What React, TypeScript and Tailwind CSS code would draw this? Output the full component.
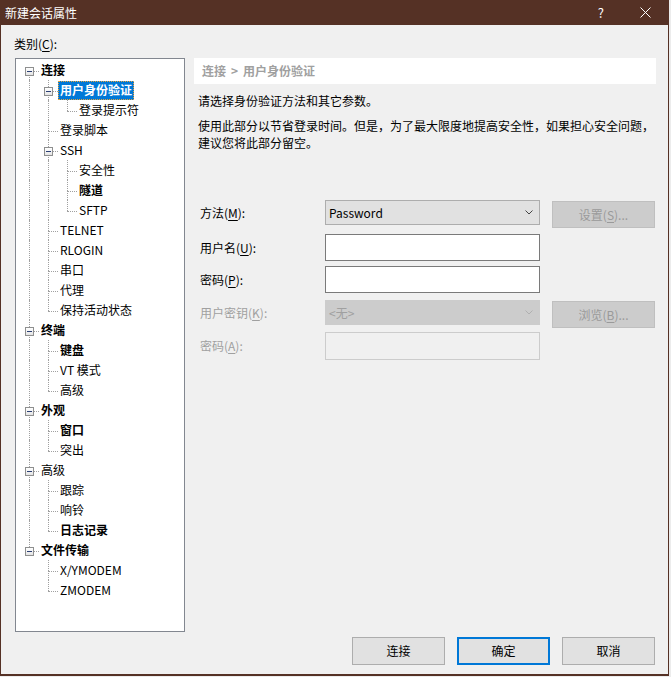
import React from 'react';

type N = { label: string; bold?: boolean; selected?: boolean; children?: N[] };

const TREE: N[] = [
  {
    label: '连接',
    bold: true,
    children: [
      { label: '用户身份验证', bold: true, selected: true, children: [{ label: '登录提示符' }] },
      { label: '登录脚本' },
      { label: 'SSH', children: [{ label: '安全性' }, { label: '隧道', bold: true }, { label: 'SFTP' }] },
      { label: 'TELNET' },
      { label: 'RLOGIN' },
      { label: '串口' },
      { label: '代理' },
      { label: '保持活动状态' },
    ],
  },
  { label: '终端', bold: true, children: [{ label: '键盘', bold: true }, { label: 'VT 模式' }, { label: '高级' }] },
  { label: '外观', bold: true, children: [{ label: '窗口', bold: true }, { label: '突出' }] },
  { label: '高级', children: [{ label: '跟踪' }, { label: '响铃' }, { label: '日志记录', bold: true }] },
  { label: '文件传输', bold: true, children: [{ label: 'X/YMODEM' }, { label: 'ZMODEM' }] },
];

type Row = { node: N; depth: number; cont: boolean[]; isLast: boolean; isFirstRoot: boolean };

function flatten(nodes: N[], depth: number, cont: boolean[], out: Row[]): Row[] {
  nodes.forEach((n, i) => {
    const isLast = i === nodes.length - 1;
    out.push({ node: n, depth, cont, isLast, isFirstRoot: depth === 0 && i === 0 });
    if (n.children) flatten(n.children, depth + 1, [...cont, !isLast], out);
  });
  return out;
}

const ROWS = flatten(TREE, 0, [], []);

function TreeRow({ r }: { r: Row }) {
  const line = 'absolute border-dotted border-[#a0a0a0]';
  return (
    <div className="flex h-[20px] items-center">
      {r.cont.map((c, i) => (
        <div key={i} className="relative h-full w-[19px] shrink-0">
          {c && <span className={`${line} left-[9px] top-0 h-full border-l`} />}
        </div>
      ))}
      <div className="relative h-full w-[19px] shrink-0">
        {!r.isFirstRoot && <span className={`${line} left-[9px] top-0 h-[11px] border-l`} />}
        {!r.isLast && <span className={`${line} left-[9px] top-[11px] h-[9px] border-l`} />}
        <span className={`${line} left-[9px] top-[11px] w-[10px] border-t`} />
        {r.node.children && (
          <span className="absolute left-[5px] top-[7px] flex h-[9px] w-[9px] items-center justify-center border border-[#8e8f8f] bg-gradient-to-b from-white to-[#e4e4e4]">
            <span className="h-px w-[5px] bg-[#2b3f74]" />
          </span>
        )}
      </div>
      <span
        className={
          r.node.selected
            ? 'h-[19px] whitespace-nowrap border border-dotted border-[#e8a33a] bg-[#0078d7] px-px font-bold leading-[15px] text-white'
            : `h-[19px] whitespace-nowrap border border-transparent px-px leading-[15px] text-black ${r.node.bold ? 'font-bold' : ''}`
        }
      >
        {r.node.label}
      </span>
    </div>
  );
}

function Chevron({ color }: { color: string }) {
  return (
    <svg width="8" height="5" viewBox="0 0 8 5" fill="none">
      <path d="M0.5 0.5 L4 4 L7.5 0.5" stroke={color} strokeWidth="1" />
    </svg>
  );
}

export default function App() {
  return (
    <div className="h-[677px] w-[671px] bg-[#ececec] font-['Noto_Sans_CJK_SC','Noto_Sans',sans-serif] text-[12px] text-black">
      <div className="flex h-[676px] w-[669px] flex-col border-x border-b-2 border-[#553125] bg-[#f0f0f0]">
        {/* title bar */}
        <div className="flex h-[25px] shrink-0 items-center bg-[#553125] pl-[4px] text-white">
          <span className="text-[12px] leading-[16px]">新建会话属性</span>
          <span className="ml-auto mr-[36px] text-[13px] leading-[16px]">?</span>
          <svg width="11" height="11" viewBox="0 0 11 11" className="mr-[17px]">
            <path d="M0.5 0.5 L10.5 10.5 M10.5 0.5 L0.5 10.5" stroke="white" strokeWidth="1" />
          </svg>
        </div>

        <div className="flex flex-1 flex-col pt-[11px]">
          <div className="h-[16px] pl-[13px] leading-[16px]">
            类别(<u className="underline-offset-2">C</u>):
          </div>

          <div className="mt-[6px] flex pl-[14px]">
            {/* tree */}
            <div className="h-[574px] w-[170px] shrink-0 border border-[#828790] bg-white pl-[4px] pt-px">
              {ROWS.map((r, i) => (
                <TreeRow key={i} r={r} />
              ))}
            </div>

            {/* right panel */}
            <div className="ml-[9px] flex w-[462px] flex-col">
              <div className="flex h-[26px] items-center bg-white pl-[8px] font-bold text-[#a0a0a0]">
                <span>连接</span>
                <span className="mx-[5px]">&gt;</span>
                <span>用户身份验证</span>
              </div>
              <div className="mt-[8px] pl-[4px] leading-[17px]">请选择身份验证方法和其它参数。</div>
              <div className="mt-[8px] whitespace-nowrap pl-[4px] leading-[17px]">
                使用此部分以节省登录时间。但是，为了最大限度地提高安全性，如果担心安全问题，
                <br />
                建议您将此部分留空。
              </div>

              {/* form */}
              <div className="mt-[49px] flex flex-col pl-[6px]">
                <div className="flex items-start">
                  <div className="w-[125px] leading-[25px]">
                    方法(<u className="underline-offset-2">M</u>):
                  </div>
                  <div className="flex h-[25px] w-[215px] items-center justify-between border border-[#adadad] bg-[#e1e1e1] pl-[3px] pr-[6px]">
                    <span>Password</span>
                    <Chevron color="#444" />
                  </div>
                  <div className="ml-[12px] mt-px flex h-[27px] w-[103px] items-center justify-center border border-[#bfbfbf] bg-[#cccccc] text-[#9a9a9a]">
                    设置(<u className="underline-offset-2">S</u>)...
                  </div>
                </div>

                <div className="mt-[6px] flex items-start">
                  <div className="w-[125px] leading-[27px]">
                    用户名(<u className="underline-offset-2">U</u>):
                  </div>
                  <div className="h-[27px] w-[215px] border border-[#7a7a7a] bg-white" />
                </div>

                <div className="mt-[5px] flex items-start">
                  <div className="w-[125px] leading-[27px]">
                    密码(<u className="underline-offset-2">P</u>):
                  </div>
                  <div className="h-[27px] w-[215px] border border-[#7a7a7a] bg-white" />
                </div>

                <div className="mt-[7px] flex items-start">
                  <div className="w-[125px] leading-[25px] text-[#a0a0a0]">
                    用户密钥(<u className="underline-offset-2">K</u>):
                  </div>
                  <div className="flex h-[25px] w-[215px] items-center justify-between border border-[#cccccc] bg-[#cccccc] pl-[3px] pr-[6px] text-[#a0a0a0]">
                    <span>&lt;无&gt;</span>
                    <Chevron color="#b0b0b0" />
                  </div>
                  <div className="ml-[12px] mt-px flex h-[27px] w-[103px] items-center justify-center border border-[#bfbfbf] bg-[#cccccc] text-[#9a9a9a]">
                    浏览(<u className="underline-offset-2">B</u>)...
                  </div>
                </div>

                <div className="mt-[4px] flex items-start">
                  <div className="w-[125px] leading-[28px] text-[#a0a0a0]">
                    密码(<u className="underline-offset-2">A</u>):
                  </div>
                  <div className="h-[28px] w-[215px] border border-[#cccccc] bg-[#f0f0f0]" />
                </div>
              </div>
            </div>
          </div>

          {/* bottom buttons */}
          <div className="mt-[5px] flex justify-end gap-[12px] pr-[13px]">
            <div className="flex h-[28px] w-[93px] items-center justify-center border border-[#adadad] bg-[#e1e1e1]">连接</div>
            <div className="flex h-[28px] w-[93px] items-center justify-center border-2 border-[#0078d7] bg-[#e1e1e1]">确定</div>
            <div className="flex h-[28px] w-[93px] items-center justify-center border border-[#adadad] bg-[#e1e1e1]">取消</div>
          </div>
        </div>
      </div>
    </div>
  );
}
